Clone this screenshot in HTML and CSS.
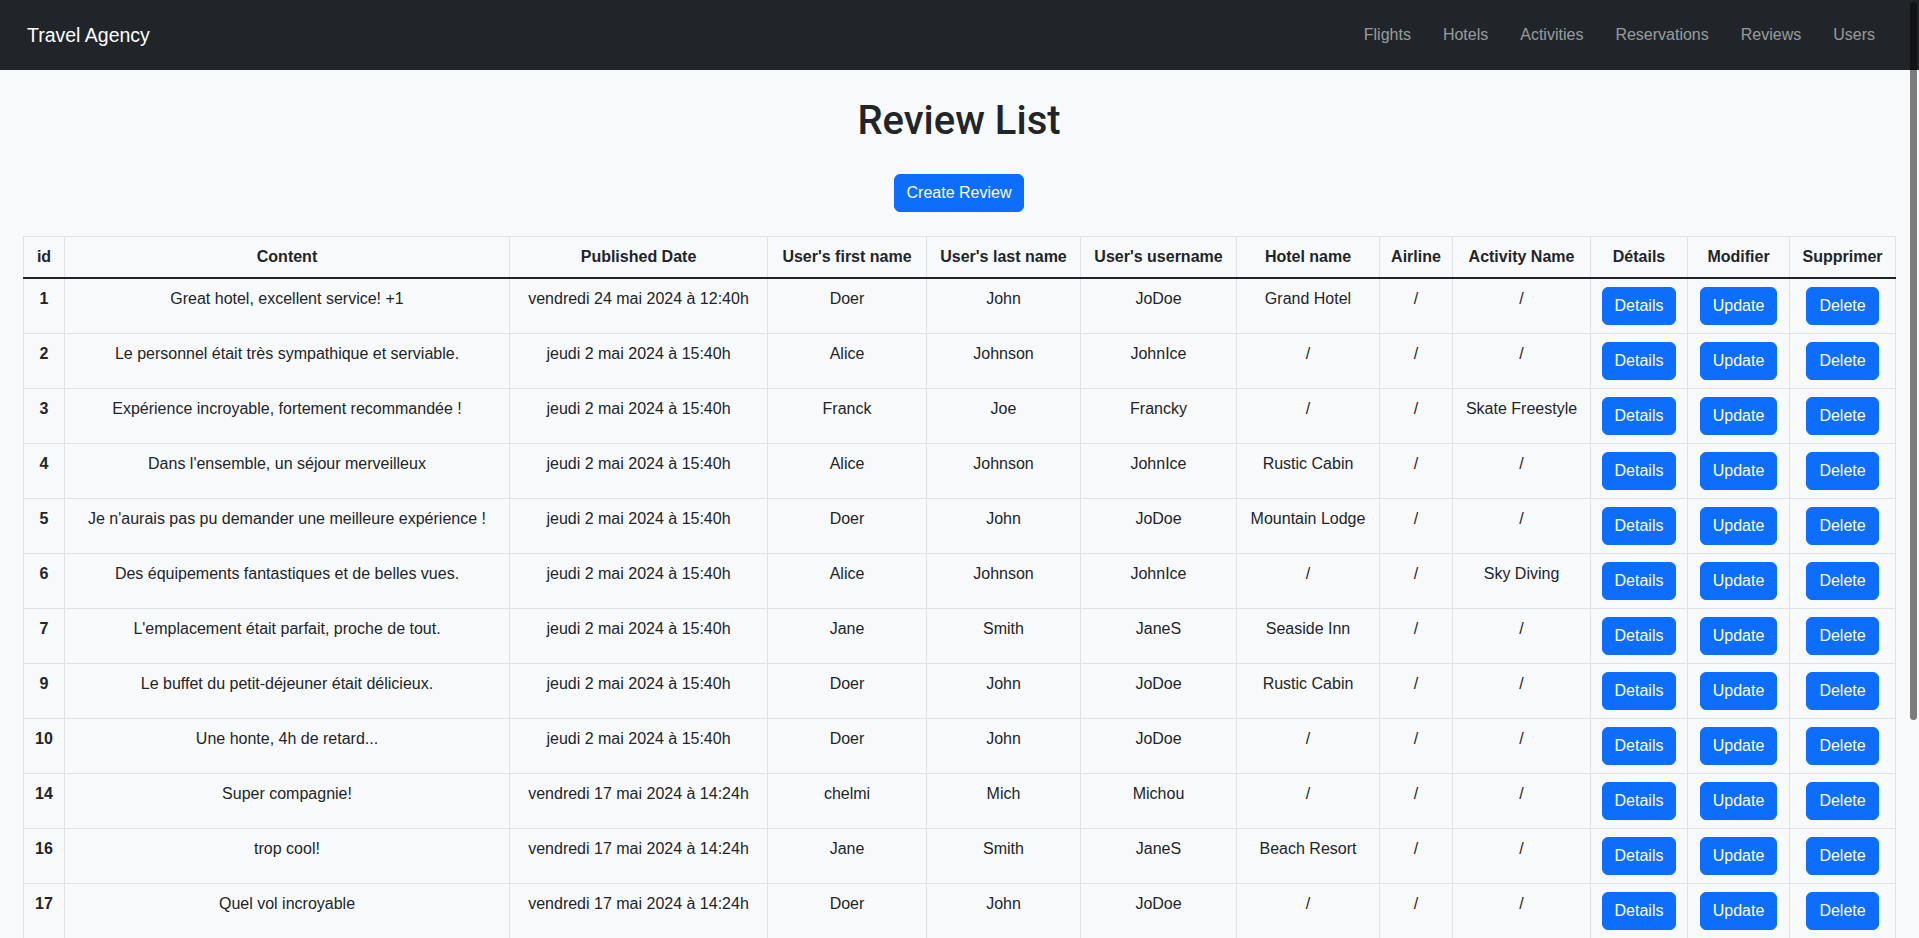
FILE: index.html
```html
<!DOCTYPE html>
<html lang="fr">
<head>
<meta charset="utf-8">
<title>Review List</title>
<link rel="stylesheet" href="styles.css">
</head>
<body>
<header class="navbar">
  <a class="brand" href="#">Travel Agency</a>
  <nav class="nav">
    <a class="nav-link" href="#">Flights</a>
    <a class="nav-link" href="#">Hotels</a>
    <a class="nav-link" href="#">Activities</a>
    <a class="nav-link" href="#">Reservations</a>
    <a class="nav-link" href="#">Reviews</a>
    <a class="nav-link" href="#">Users</a>
  </nav>
</header>
<main class="page">
  <h1 class="title">Review List</h1>
  <div class="actions"><a class="btn" href="#">Create Review</a></div>
  <table class="table">
    <colgroup>
      <col class="c-id"><col class="c-content"><col class="c-date"><col class="c-first"><col class="c-last"><col class="c-user"><col class="c-hotel"><col class="c-airline"><col class="c-activity"><col class="c-details"><col class="c-update"><col class="c-delete">
    </colgroup>
    <thead>
      <tr><th>id</th><th>Content</th><th>Published Date</th><th>User's first name</th><th>User's last name</th><th>User's username</th><th>Hotel name</th><th>Airline</th><th>Activity Name</th><th>Détails</th><th>Modifier</th><th>Supprimer</th></tr>
    </thead>
    <tbody>
      <tr><th>1</th><td>Great hotel, excellent service! +1</td><td>vendredi 24 mai 2024 à 12:40h</td><td>Doer</td><td>John</td><td>JoDoe</td><td>Grand Hotel</td><td>/</td><td>/</td><td><a class="btn" href="#">Details</a></td><td><a class="btn" href="#">Update</a></td><td><a class="btn" href="#">Delete</a></td></tr>
      <tr><th>2</th><td>Le personnel était très sympathique et serviable.</td><td>jeudi 2 mai 2024 à 15:40h</td><td>Alice</td><td>Johnson</td><td>JohnIce</td><td>/</td><td>/</td><td>/</td><td><a class="btn" href="#">Details</a></td><td><a class="btn" href="#">Update</a></td><td><a class="btn" href="#">Delete</a></td></tr>
      <tr><th>3</th><td>Expérience incroyable, fortement recommandée !</td><td>jeudi 2 mai 2024 à 15:40h</td><td>Franck</td><td>Joe</td><td>Francky</td><td>/</td><td>/</td><td>Skate Freestyle</td><td><a class="btn" href="#">Details</a></td><td><a class="btn" href="#">Update</a></td><td><a class="btn" href="#">Delete</a></td></tr>
      <tr><th>4</th><td>Dans l'ensemble, un séjour merveilleux</td><td>jeudi 2 mai 2024 à 15:40h</td><td>Alice</td><td>Johnson</td><td>JohnIce</td><td>Rustic Cabin</td><td>/</td><td>/</td><td><a class="btn" href="#">Details</a></td><td><a class="btn" href="#">Update</a></td><td><a class="btn" href="#">Delete</a></td></tr>
      <tr><th>5</th><td>Je n'aurais pas pu demander une meilleure expérience !</td><td>jeudi 2 mai 2024 à 15:40h</td><td>Doer</td><td>John</td><td>JoDoe</td><td>Mountain Lodge</td><td>/</td><td>/</td><td><a class="btn" href="#">Details</a></td><td><a class="btn" href="#">Update</a></td><td><a class="btn" href="#">Delete</a></td></tr>
      <tr><th>6</th><td>Des équipements fantastiques et de belles vues.</td><td>jeudi 2 mai 2024 à 15:40h</td><td>Alice</td><td>Johnson</td><td>JohnIce</td><td>/</td><td>/</td><td>Sky Diving</td><td><a class="btn" href="#">Details</a></td><td><a class="btn" href="#">Update</a></td><td><a class="btn" href="#">Delete</a></td></tr>
      <tr><th>7</th><td>L'emplacement était parfait, proche de tout.</td><td>jeudi 2 mai 2024 à 15:40h</td><td>Jane</td><td>Smith</td><td>JaneS</td><td>Seaside Inn</td><td>/</td><td>/</td><td><a class="btn" href="#">Details</a></td><td><a class="btn" href="#">Update</a></td><td><a class="btn" href="#">Delete</a></td></tr>
      <tr><th>9</th><td>Le buffet du petit-déjeuner était délicieux.</td><td>jeudi 2 mai 2024 à 15:40h</td><td>Doer</td><td>John</td><td>JoDoe</td><td>Rustic Cabin</td><td>/</td><td>/</td><td><a class="btn" href="#">Details</a></td><td><a class="btn" href="#">Update</a></td><td><a class="btn" href="#">Delete</a></td></tr>
      <tr><th>10</th><td>Une honte, 4h de retard...</td><td>jeudi 2 mai 2024 à 15:40h</td><td>Doer</td><td>John</td><td>JoDoe</td><td>/</td><td>/</td><td>/</td><td><a class="btn" href="#">Details</a></td><td><a class="btn" href="#">Update</a></td><td><a class="btn" href="#">Delete</a></td></tr>
      <tr><th>14</th><td>Super compagnie!</td><td>vendredi 17 mai 2024 à 14:24h</td><td>chelmi</td><td>Mich</td><td>Michou</td><td>/</td><td>/</td><td>/</td><td><a class="btn" href="#">Details</a></td><td><a class="btn" href="#">Update</a></td><td><a class="btn" href="#">Delete</a></td></tr>
      <tr><th>16</th><td>trop cool!</td><td>vendredi 17 mai 2024 à 14:24h</td><td>Jane</td><td>Smith</td><td>JaneS</td><td>Beach Resort</td><td>/</td><td>/</td><td><a class="btn" href="#">Details</a></td><td><a class="btn" href="#">Update</a></td><td><a class="btn" href="#">Delete</a></td></tr>
      <tr><th>17</th><td>Quel vol incroyable</td><td>vendredi 17 mai 2024 à 14:24h</td><td>Doer</td><td>John</td><td>JoDoe</td><td>/</td><td>/</td><td>/</td><td><a class="btn" href="#">Details</a></td><td><a class="btn" href="#">Update</a></td><td><a class="btn" href="#">Delete</a></td></tr>
    </tbody>
  </table>
</main>
<div class="scroll-thumb" aria-hidden="true"></div>
</body>
</html>
```
FILE: styles.css
```css
html {
  scrollbar-width: none;
}
html::-webkit-scrollbar {
  display: none;
}
body {
  margin: 0;
  background: #f8f9fa;
  color: #212529;
  font-family: "Liberation Sans", Arial, sans-serif;
  font-size: 16px;
  line-height: 1.5;
}
a {
  text-decoration: none;
}
.navbar {
  height: 70px;
  background: #212529;
  display: flex;
  align-items: center;
  justify-content: space-between;
  padding: 0 28px 0 27px;
}
.brand {
  color: #fff;
  font-size: 19.5px;
  line-height: 30px;
}
.nav {
  display: flex;
}
.nav-link {
  color: rgba(255, 255, 255, 0.55);
  padding: 8px 16px;
  line-height: 24px;
}
.page {
  padding: 0 24px 0 23px;
}
.title {
  margin: 27px 0 29px;
  text-align: center;
  font-family: Roboto, "Liberation Sans", sans-serif;
  font-weight: 500;
  font-size: 40px;
  line-height: 1.2;
}
.actions {
  text-align: center;
  margin-bottom: 24px;
}
.btn {
  display: inline-block;
  background: #0d6efd;
  border: 1px solid #0d6efd;
  color: #fff;
  border-radius: 6px;
  padding: 6px 12px;
  font-size: 16px;
  line-height: 24px;
}
.table {
  width: 100%;
  table-layout: fixed;
  border-collapse: collapse;
}
.table th,
.table td {
  border: 1px solid #dee2e6;
  padding: 8px;
  text-align: center;
  vertical-align: top;
  line-height: 24px;
  white-space: nowrap;
}
.table th {
  font-weight: 700;
}
.table thead th {
  border-bottom: 2px solid #212529;
}
.c-id { width: 41px; }
.c-content { width: 445px; }
.c-date { width: 258px; }
.c-first { width: 159px; }
.c-last { width: 154px; }
.c-user { width: 156px; }
.c-hotel { width: 143px; }
.c-airline { width: 73px; }
.c-activity { width: 138px; }
.c-details { width: 97px; }
.c-update { width: 102px; }
.c-delete { width: 106px; }
.scroll-thumb {
  position: fixed;
  top: 2px;
  right: 2px;
  width: 7px;
  height: 718px;
  border-radius: 4px;
  background: rgba(0, 0, 0, 0.5);
}
```
